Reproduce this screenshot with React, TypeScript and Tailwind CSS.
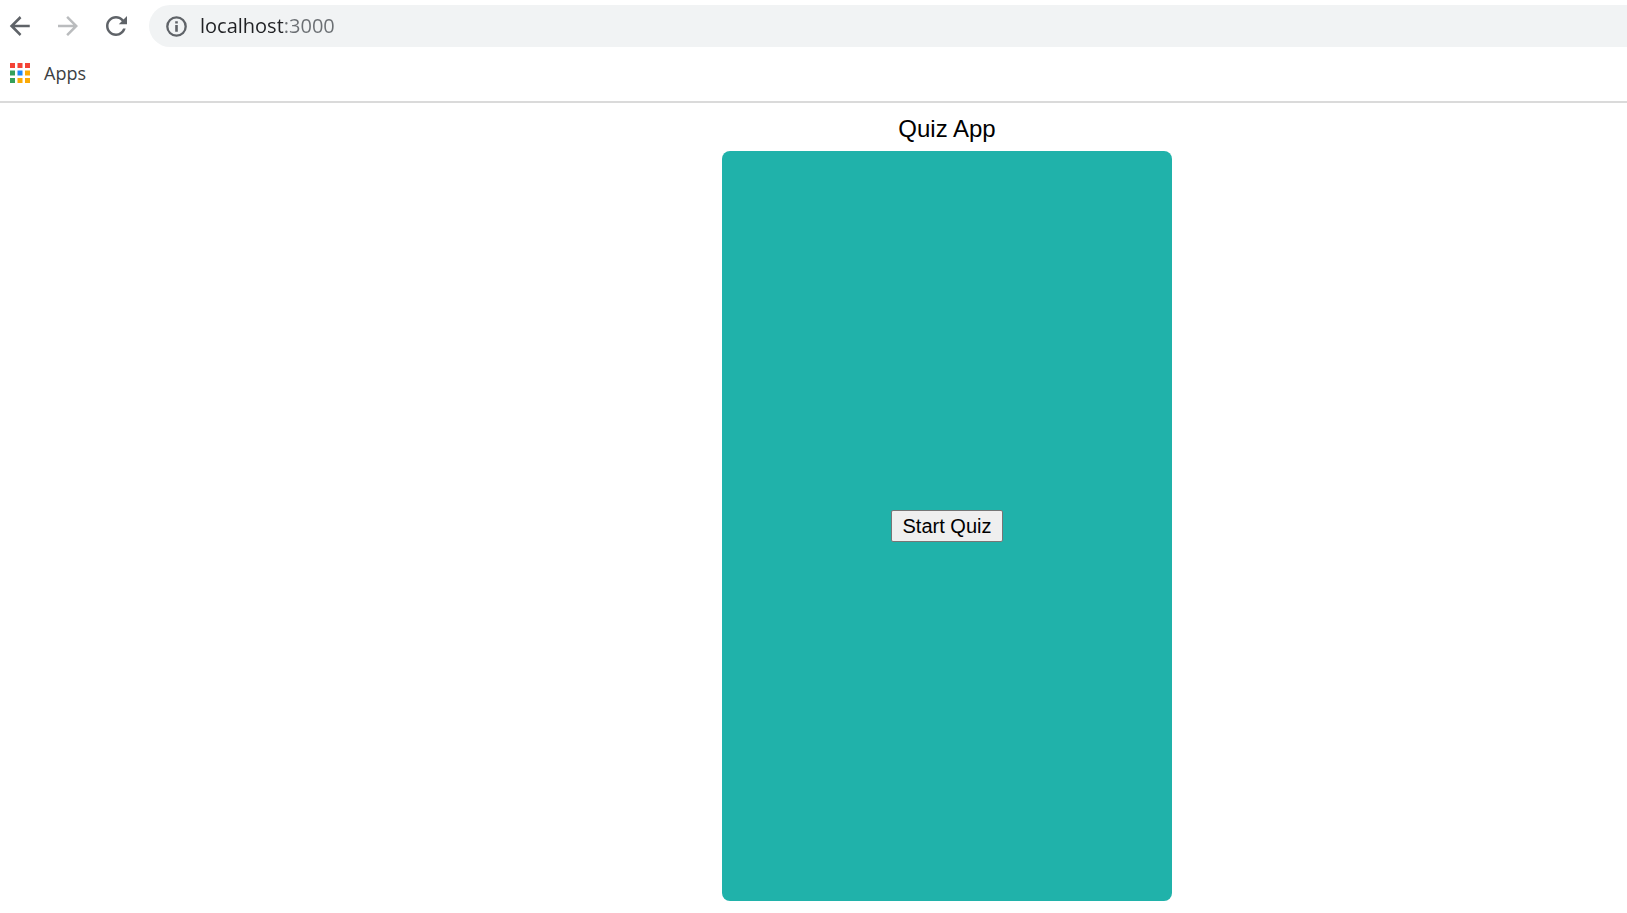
import { useState } from "react";

const appDots = [
  "fill-[#f44336]", "fill-[#f44336]", "fill-[#f44336]",
  "fill-[#34a05a]", "fill-[#1e88f5]", "fill-[#fbaa05]",
  "fill-[#34a05a]", "fill-[#fbaa05]", "fill-[#fbaa05]",
];

function ToolbarButton({ label, path, disabled = false }: { label: string; path: string; disabled?: boolean }) {
  return (
    <button type="button" aria-label={label} disabled={disabled} className="text-[#5f6368] disabled:text-[#babcbe]">
      <svg viewBox="0 0 24 24" className="size-[30px] fill-current" aria-hidden="true">
        <path d={path} />
      </svg>
    </button>
  );
}

function BrowserBar() {
  const [address, setAddress] = useState("localhost:3000");

  return (
    <header className="border-b-2 border-[#dadada] font-['Open_Sans',sans-serif]">
      <div className="flex items-center gap-[18px] pt-[5px] pl-[5px]">
        <ToolbarButton label="Back" path="M19.8 11H7.83l5.3-5.3L11.8 4l-8 8 8 8 1.33-1.7L7.83 13H19.8v-2z" />
        <ToolbarButton label="Forward" disabled path="M12 4l-1.41 1.41L16.17 11H4v2h12.17l-5.58 5.59L12 20l8-8z" />
        <ToolbarButton
          label="Reload"
          path="M17.65 6.35C16.2 4.9 14.21 4 12 4c-4.42 0-7.99 3.58-7.99 8s3.57 8 7.99 8c3.73 0 6.84-2.55 7.73-6h-2.08c-.82 2.33-3.04 4-5.65 4-3.31 0-6-2.69-6-6s2.69-6 6-6c1.66 0 3.14.69 4.22 1.78l1.2 1.2 1.43-1.43zM20.8 4l-6.6 6.64h6.6z"
        />
        <div className="flex h-[42px] grow items-center gap-[11px] rounded-l-full bg-[#f1f3f4] pl-[15px]">
          <svg viewBox="0 0 25 25" className="size-[25px] shrink-0" aria-hidden="true">
            <circle cx="12.5" cy="12.5" r="9.2" className="fill-none stroke-[#5f6368]" strokeWidth="2.3" />
            <path d="M11.2 7.2h2.6v2.4h-2.6zM11.2 10.9h2.6v6.8h-2.6z" className="fill-[#5f6368]" />
          </svg>
          <input
            aria-label="Address"
            value={address}
            onChange={(e) => setAddress(e.target.value)}
            className="grow bg-[linear-gradient(90deg,#202124_83px,#6b6f73_83px)] bg-clip-text text-xl text-transparent outline-none"
          />
        </div>
      </div>
      <nav className="flex h-[54px] items-center pb-[2px] pl-[10px]">
        <a href="#apps" className="flex items-center gap-[14px] text-lg text-[#3c4043]">
          <svg viewBox="0 0 20 20" className="size-5" aria-hidden="true">
            {appDots.map((fill, i) => (
              <rect key={i} x={(i % 3) * 7.5} y={Math.floor(i / 3) * 7.5} width="5" height="5" className={fill} />
            ))}
          </svg>
          Apps
        </a>
      </nav>
    </header>
  );
}

export default function App() {
  return (
    <div className="min-h-screen bg-white text-black">
      <BrowserBar />
      <main className="flex flex-col items-center pt-3 pb-3 pl-[267px] font-['Liberation_Sans',Arial,sans-serif]">
        <h1 className="text-2xl leading-7">Quiz App</h1>
        <section className="mt-2 flex h-[750px] w-[450px] items-center justify-center rounded-lg bg-[#20b2aa]">
          <button
            type="button"
            className="h-8 rounded-xs border border-[#767676] bg-[#efefef] px-[11px] text-xl leading-7"
          >
            Start Quiz
          </button>
        </section>
      </main>
    </div>
  );
}
